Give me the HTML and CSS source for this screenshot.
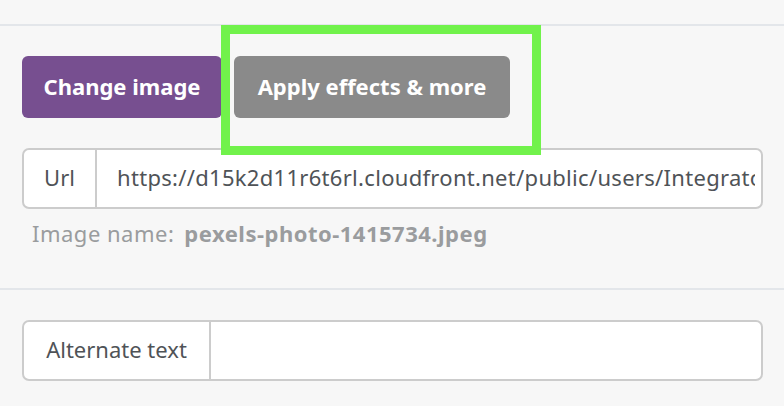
FILE: index.html
```html
<!DOCTYPE html>
<html>
<head>
<meta charset="utf-8">
<link rel="stylesheet" href="styles.css">
</head>
<body>
<div class="divider first"></div>
<section class="section">
  <div class="actions">
    <button class="btn btn-primary">Change image</button>
    <span class="highlight-wrap">
      <button class="btn btn-muted">Apply effects &amp; more</button>
    </span>
  </div>
  <div class="input-group url-group">
    <span class="addon">Url</span>
    <input class="field" type="text" readonly value="https://d15k2d11r6t6rl.cloudfront.net/public/users/Integrators/BeeProAgency/pexels-photo-1415734.jpeg">
  </div>
  <div class="image-name"><span class="label">Image name:</span><span class="value">pexels-photo-1415734.jpeg</span></div>
</section>
<div class="divider"></div>
<section class="section alt-section">
  <div class="input-group">
    <span class="addon addon-wide">Alternate text</span>
    <input class="field" type="text" value="">
  </div>
</section>
</body>
</html>
```

FILE: styles.css
```css
html, body {
  margin: 0;
  padding: 0;
  background: #f7f7f7;
  font-family: "Noto Sans", "Open Sans", sans-serif;
  overflow: hidden;
}

.divider {
  height: 0;
  border-top: 2px solid #e3e6ea;
}

.divider.first {
  margin-top: 24px;
}

.section {
  padding: 30px 21px 0 22px;
}

.actions {
  display: flex;
  gap: 12px;
}

.btn {
  height: 62px;
  border: none;
  border-radius: 6px;
  color: #fff;
  font-family: inherit;
  font-weight: 700;
  font-size: 22px;
  padding: 0 0 3px;
  margin: 0;
  cursor: pointer;
}

.btn-primary {
  background: #774f90;
  width: 200px;
}

.btn-muted {
  background: #8a8a8a;
  width: 276px;
}

.highlight-wrap {
  position: relative;
  display: block;
}

.highlight-wrap::after {
  content: "";
  position: absolute;
  left: -13px;
  top: -31px;
  right: -31px;
  bottom: -37px;
  border: 9px solid #71f24b;
  pointer-events: none;
}

.input-group {
  display: flex;
  height: 61px;
  box-sizing: border-box;
  border: 2px solid #cccccc;
  border-radius: 7px;
  background: #fff;
  overflow: hidden;
}

.url-group {
  margin-top: 30px;
}

.addon {
  display: flex;
  align-items: center;
  justify-content: center;
  width: 71px;
  padding-bottom: 3px;
  border-right: 2px solid #cccccc;
  color: #4f5357;
  font-size: 22px;
  flex-shrink: 0;
}

.addon-wide {
  width: 185px;
}

.field {
  flex: 1;
  min-width: 0;
  border: none;
  outline: none;
  background: transparent;
  margin: 0;
  padding: 0 6px 3px 20px;
  color: #4f5357;
  font-family: inherit;
  font-size: 22px;
  letter-spacing: 0.3px;
}

.image-name {
  margin-top: 12px;
  padding-left: 10px;
  line-height: 24px;
  font-size: 22px;
  letter-spacing: 0.5px;
  color: #9a9c9e;
}

.image-name .value {
  font-weight: 700;
  margin-left: 10px;
}

.section + .divider {
  margin-top: 43px;
}

.alt-section {
  padding-top: 30px;
}
```
